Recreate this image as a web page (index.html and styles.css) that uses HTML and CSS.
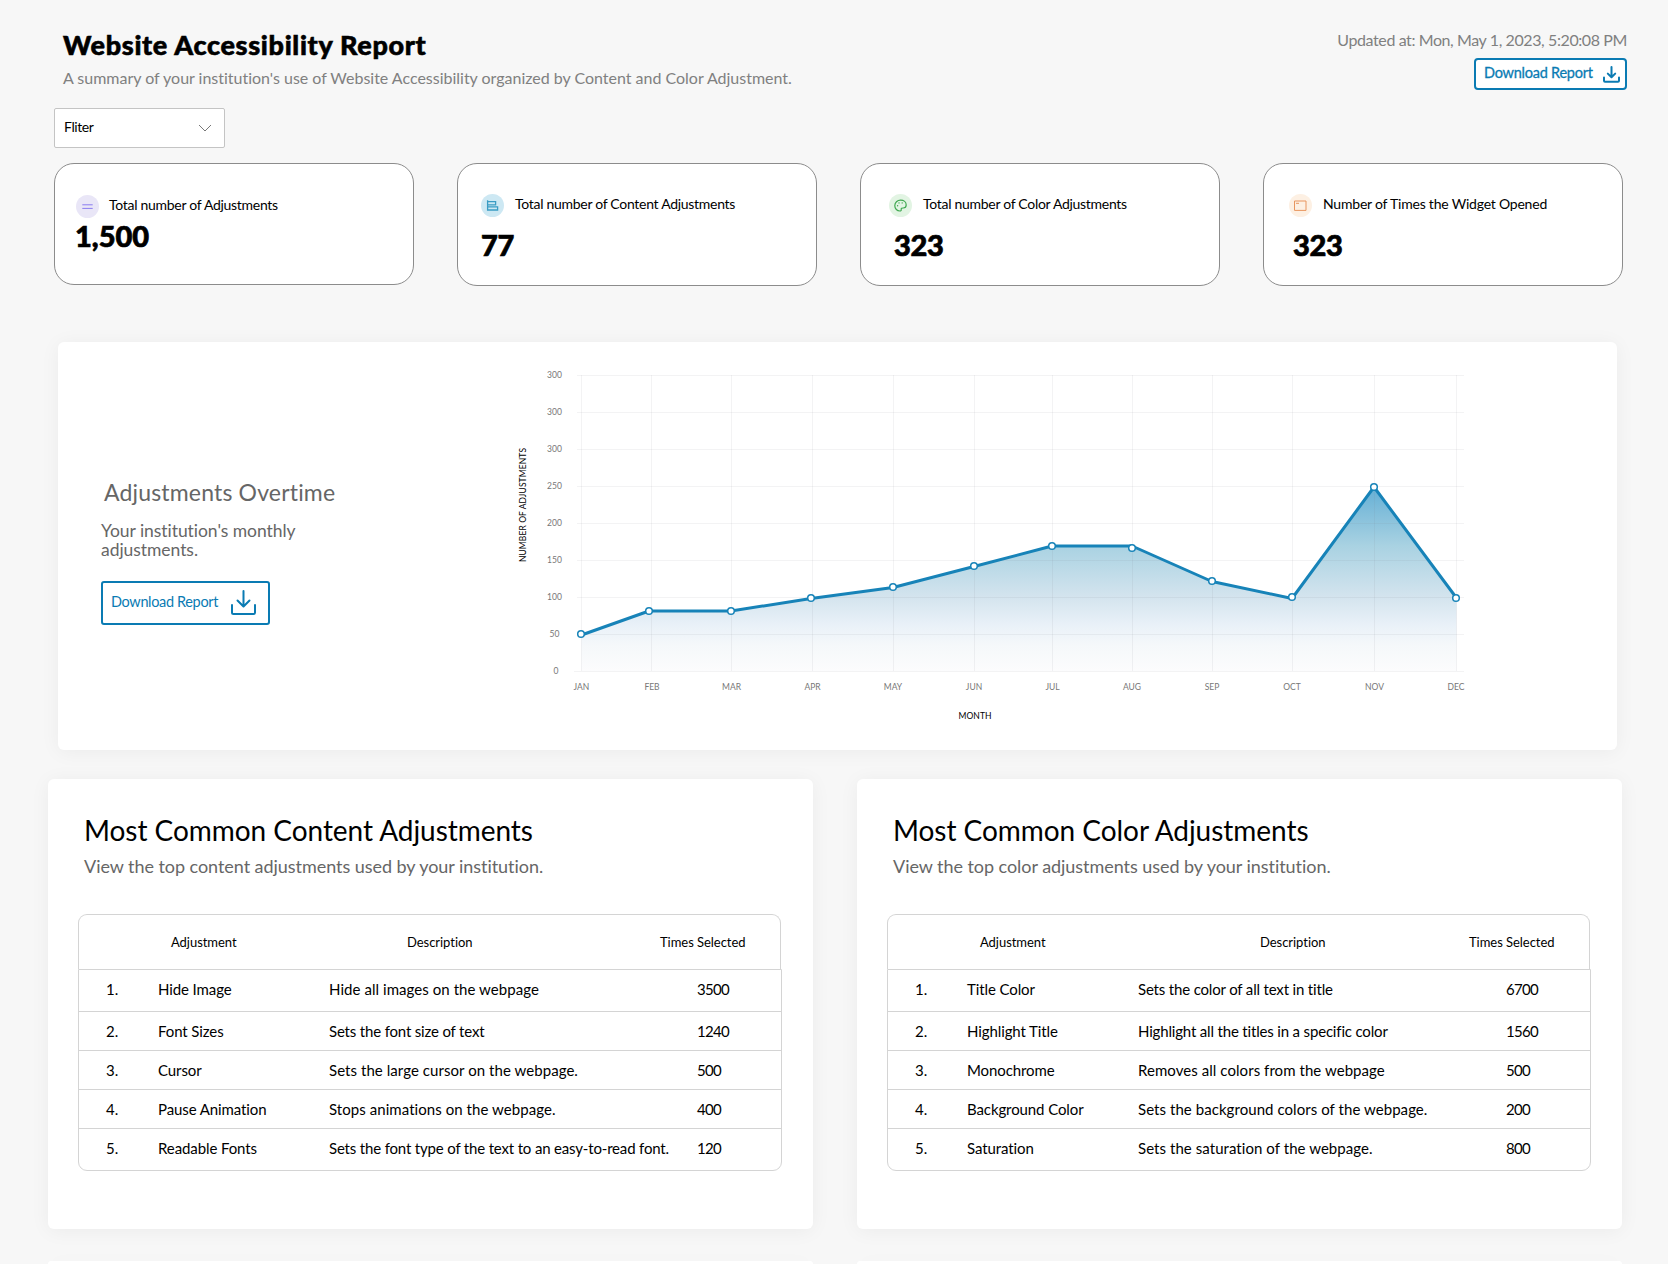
FILE: index.html
```html
<!DOCTYPE html>
<html lang="en">
<head>
  <meta charset="UTF-8" />
  <meta name="viewport" content="width=device-width, initial-scale=1.0"/>
  <title>Website Accessibility Report</title>
  <link rel="stylesheet" href="styles.css">
</head>
<body>

  <header class="header">
    <div>
      <h1>Website Accessibility Report</h1>
      <p class="summary">A summary of your institution's use of Website Accessibility organized by Content and Color Adjustment.</p>
    </div>
    <div class="header-right">
      <p class="updated">Updated at: Mon, May 1, 2023, 5:20:08 PM</p>
      <button class="download download-small">
        <span>Download Report</span>
        <svg width="17" height="17" viewBox="0 0 17 17"><path d="M8.5 1v10M4.8 7.6l3.7 3.7 3.7-3.7M1 11.5v3.2q0 1 1 1h13q1 0 1-1v-3.2"/></svg>
      </button>
    </div>
  </header>

  <button class="filter">
    <span>Fliter</span>
    <svg width="14" height="8" viewBox="0 0 14 8"><path d="M1 1l6 6 6-6"/></svg>
  </button>

  <section class="stats">
    <div class="stat stat-total">
      <div class="stat-top">
        <svg class="stat-icon" viewBox="0 0 23 23">
          <circle cx="11.5" cy="11.5" r="11.5" fill="#e9e6f7"/>
          <path d="M6.3 9.8h10.4M6.3 13.4h10.4" stroke="#8a7df0"/>
        </svg>
        <span>Total number of Adjustments</span>
      </div>
      <div class="value">1,500</div>
    </div>
    <div class="stat stat-content">
      <div class="stat-top">
        <svg class="stat-icon" viewBox="0 0 23 23">
          <circle cx="11.5" cy="11.5" r="11.5" fill="#cde8f3"/>
          <path d="M6.6 6.2v10.6M6.6 7.6h8v3.2h-8M6.600 12.800h10v3.200h-10" stroke="#3a9cc4" stroke-width="1.3"/>
        </svg>
        <span>Total number of Content Adjustments</span>
      </div>
      <div class="value">77</div>
    </div>
    <div class="stat stat-color">
      <div class="stat-top">
        <svg class="stat-icon" viewBox="0 0 23 23">
          <circle cx="11.5" cy="11.5" r="11.5" fill="#e2f4e3"/>
          <path d="M11.6 6.2c3.200 0 5.600 2 5.600 4.800 0 2.200-1.500 3-3 3-1.400 0-2.300.2-2 1.500.2 1-.4 1.500-1.300 1.500-2.800 0-5.100-2.300-5.100-5.300 0-3.100 2.500-5.500 5.800-5.500z" stroke="#3fa850" stroke-width="1.2"/>
          <g fill="#3fa850"><circle cx="8.6" cy="11.800" r=".7"/><circle cx="10" cy="8.900" r=".7"/><circle cx="13.200" cy="8.900" r=".7"/></g>
        </svg>
        <span>Total number of Color Adjustments</span>
      </div>
      <div class="value">323</div>
    </div>
    <div class="stat stat-widget">
      <div class="stat-top">
        <svg class="stat-icon" viewBox="0 0 23 23">
          <circle cx="11.5" cy="11.5" r="11.5" fill="#fdf0e3"/>
          <path d="M5.500 7h11.500v9.400H5.500z" stroke="#e8955f"/>
          <path d="M7 9.300h3" stroke="#e8955f"/>
        </svg>
        <span>Number of Times the Widget Opened</span>
      </div>
      <div class="value">323</div>
    </div>
  </section>

  <section class="overtime">
    <div class="overtime-info">
      <h2>Adjustments Overtime</h2>
      <p>Your institution's monthly<br>adjustments.</p>
      <button class="download download-large">
        <span>Download Report</span>
        <svg width="25" height="25" viewBox="0 0 25 25"><path d="M12.5 1v15M6.5 10.5l6 6 6-6M1 15v7.500q0 1.500 1.500 1.500h20q1.500 0 1.500-1.500V15"/></svg>
      </button>
    </div>
    <svg class="chart" viewBox="510 342 960 408">
      <defs>
        <linearGradient id="area" x1="0" y1="487" x2="0" y2="671" gradientUnits="userSpaceOnUse">
          <stop offset="0" stop-color="#64afd5"/>
          <stop offset=".32" stop-color="#a9d2e2"/>
          <stop offset=".6" stop-color="#d4e4ee"/>
          <stop offset=".75" stop-color="#e9f1f8"/>
          <stop offset=".86" stop-color="#f5f8fa"/>
          <stop offset="1" stop-color="#fcfcfd"/>
        </linearGradient>
      </defs>
      <path class="area" d="M581.5 635L649 611H731L811 598.5 893 587.5 974 566.5 1052 546H1132L1212 581.5 1292 598.5 1374 487 1456.5 598V671H581.5z"/>
      <path class="grid" d="M577 375.5h887M577 412.5h887M577 449.5h887M577 486.5h887M577 523.5h887M577 560.5h887M577 597.5h887M577 634.5h887M574 671.5h890M581.5 375v296M651.5 375v296M731.5 375v296M812.5 375v296M893.5 375v296M974.5 375v296M1052.5 375v296M1132.5 375v296M1212.5 375v296M1292.5 375v296M1374.5 375v296M1456.5 375v296"/>
      <path class="line" d="M581.5 635L649 611H731L811 598.5 893 587.5 974 566.5 1052 546H1132L1212 581.5 1292 598.5 1374 487 1456.5 598"/>
      <g class="dots">
        <circle cx="581" cy="634" r="3.3"/>
        <circle cx="649" cy="611" r="3.3"/>
        <circle cx="731" cy="611" r="3.3"/>
        <circle cx="811" cy="598" r="3.3"/>
        <circle cx="893" cy="587" r="3.3"/>
        <circle cx="974" cy="566" r="3.3"/>
        <circle cx="1052" cy="546" r="3.3"/>
        <circle cx="1132" cy="548" r="3.3"/>
        <circle cx="1212" cy="581" r="3.3"/>
        <circle cx="1292" cy="597" r="3.3"/>
        <circle cx="1374" cy="487" r="3.3"/>
        <circle cx="1456" cy="598" r="3.3"/>
      </g>
      <g class="tick">
        <text x="554.5" y="378">300</text>
        <text x="554.5" y="415">300</text>
        <text x="554.5" y="452">300</text>
        <text x="554.5" y="489">250</text>
        <text x="554.5" y="526">200</text>
        <text x="554.5" y="563">150</text>
        <text x="554.5" y="600">100</text>
        <text x="554.5" y="637">50</text>
        <text x="556" y="674">0</text>
        <text x="581.5" y="690">JAN</text>
        <text x="652" y="690">FEB</text>
        <text x="731.5" y="690">MAR</text>
        <text x="812.5" y="690">APR</text>
        <text x="893" y="690">MAY</text>
        <text x="974" y="690">JUN</text>
        <text x="1052.5" y="690">JUL</text>
        <text x="1132" y="690">AUG</text>
        <text x="1212" y="690">SEP</text>
        <text x="1292" y="690">OCT</text>
        <text x="1374.5" y="690">NOV</text>
        <text x="1456" y="690">DEC</text>
      </g>
      <g class="axis">
        <text x="975" y="719">MONTH</text>
        <text transform="translate(526 505) rotate(-90)">NUMBER OF ADJUSTMENTS</text>
      </g>
    </svg>
  </section>

  <section class="panels">
    <div class="panel">
      <h2>Most Common Content Adjustments</h2>
      <p>View the top content adjustments used by your institution.</p>
      <div class="table">
        <div class="thead"><span>Adjustment</span><span>Description</span><span>Times Selected</span></div>
        <div class="tbody">
          <div class="row"><span>1.</span><span>Hide Image</span><span>Hide all images on the webpage</span><span>3500</span></div>
          <div class="row"><span>2.</span><span>Font Sizes</span><span class="tight">Sets the font size of text</span><span>1240</span></div>
          <div class="row"><span>3.</span><span>Cursor</span><span>Sets the large cursor on the webpage.</span><span>500</span></div>
          <div class="row"><span>4.</span><span>Pause Animation</span><span>Stops animations on the webpage.</span><span>400</span></div>
          <div class="row"><span>5.</span><span>Readable Fonts</span><span class="tight">Sets the font type of the text to an easy-to-read font.</span><span>120</span></div>
        </div>
      </div>
    </div>
    <div class="panel">
      <h2>Most Common Color Adjustments</h2>
      <p>View the top color adjustments used by your institution.</p>
      <div class="table">
        <div class="thead thead-color"><span>Adjustment</span><span>Description</span><span>Times Selected</span></div>
        <div class="tbody">
          <div class="row"><span>1.</span><span>Title Color</span><span class="tight">Sets the color of all text in title</span><span>6700</span></div>
          <div class="row"><span>2.</span><span>Highlight Title</span><span class="tight">Highlight all the titles in a specific color</span><span>1560</span></div>
          <div class="row"><span>3.</span><span>Monochrome</span><span>Removes all colors from the webpage</span><span>500</span></div>
          <div class="row"><span>4.</span><span>Background Color</span><span>Sets the background colors of the webpage.</span><span>200</span></div>
          <div class="row"><span>5.</span><span>Saturation</span><span>Sets the saturation of the webpage.</span><span>800</span></div>
        </div>
      </div>
    </div>
    <div class="panel panel-next"></div>
    <div class="panel panel-next"></div>
  </section>

</body>
</html>
```
FILE: styles.css
```css
* { box-sizing: border-box; }
body {
  margin: 0;
  height: 1264px;
  overflow: hidden;
  background: #f7f7f7;
  color: #000;
  font-family: Lato, "Liberation Sans", sans-serif;
}
h1, h2, p { margin: 0; font-weight: 400; }
svg { display: block; fill: none; flex: none; }
button { font-family: inherit; padding: 0; background: #fff; }

.header { display: flex; justify-content: space-between; padding: 28px 41px 0 63px; }
h1 {
  padding-top: 1px;
  font-size: 27px;
  line-height: 32px;
  font-weight: 900;
  letter-spacing: 0.68px;
  -webkit-text-stroke: 0.6px #000;
}
.summary { margin-top: 5px; font-size: 16px; line-height: 24px; letter-spacing: -0.01px; color: #808080; }
.header-right { display: flex; flex-direction: column; align-items: flex-end; }
.updated { font-size: 16px; line-height: 24px; letter-spacing: -0.4px; color: #808080; }

.download { display: flex; color: #0a7bb3; border: 2px solid #0a7bb3; font-size: 14.5px; }
.download svg { stroke: #0a7bb3; stroke-width: 2; stroke-linecap: round; stroke-linejoin: round; }
.download-small {
  width: 153px;
  height: 32px;
  margin-top: 6px;
  padding: 6px 0 0 8px;
  gap: 10px;
  border-radius: 4px;
  line-height: 13px;
  letter-spacing: -0.24px;
  -webkit-text-stroke: 0.3px #0a7bb3;
}
.download-large {
  width: 169px;
  height: 44px;
  margin-top: 22px;
  padding: 7px 0 0 8px;
  gap: 13px;
  border-radius: 3px;
  line-height: 23px;
  letter-spacing: -0.35px;
}

.filter {
  display: flex;
  justify-content: space-between;
  align-items: center;
  width: 171px;
  height: 40px;
  margin: 18px 0 0 54px;
  padding: 0 12px 1px 9px;
  border: 1px solid #c4c4c4;
  border-radius: 2px;
  color: #000;
  font-size: 14px;
  letter-spacing: -0.4px;
}
.filter span { padding-bottom: 2px; }
.filter svg { stroke: #777; }

.stats {
  display: grid;
  grid-template-columns: repeat(4, 360px);
  gap: 43px;
  align-items: start;
  padding: 15px 0 0 54px;
}
.stat { height: 123px; border: 1px solid #8c8c8c; border-radius: 20px; background: #fff; }
.stat-top { display: flex; gap: 11px; font-size: 14px; line-height: 19px; letter-spacing: -0.29px; }
.stat-icon { width: 23px; height: 23px; }
.value {
  margin-top: 13px;
  font-size: 29px;
  line-height: 30px;
  font-weight: 900;
  letter-spacing: -0.3px;
  -webkit-text-stroke: 0.7px #000;
}
.stat-total { height: 122px; padding: 31px 0 0 21px; }
.stat-total .stat-top { gap: 10px; }
.stat-total .value { margin-top: 3px; margin-left: -1px; letter-spacing: 0; }
.stat-content { padding: 30px 0 0 23px; }
.stat-color { padding: 30px 0 0 28px; }
.stat-color .value { margin-left: 5px; }
.stat-widget { padding: 30px 0 0 25px; }
.stat-widget .stat-top { letter-spacing: -0.21px; }
.stat-widget .value { margin-left: 4px; }

.overtime {
  display: flex;
  width: 1559px;
  height: 408px;
  margin: 56px 0 0 58px;
  border-radius: 6px;
  background: #fff;
  box-shadow: 0 2px 20px rgba(0, 0, 0, 0.05);
}
.overtime-info { width: 452px; padding: 136px 0 0 43px; color: #666; }
.overtime-info h2 { margin-left: 3px; font-size: 23px; line-height: 28px; letter-spacing: 0.17px; }
.overtime-info p { margin-top: 16px; font-size: 17.5px; line-height: 18.5px; letter-spacing: -0.05px; }
.chart { width: 960px; height: 408px; }
.area { fill: url(#area); }
.grid { stroke: rgba(120, 120, 130, 0.09); }
.line { stroke: #1783b8; stroke-width: 3; stroke-linejoin: round; }
.dots { fill: #fff; stroke: #1783b8; stroke-width: 1.5; }
.tick { fill: #777; font-size: 8.5px; text-anchor: middle; }
.axis { fill: #000; font-size: 8.5px; text-anchor: middle; letter-spacing: 0.1px; }

.panels {
  display: grid;
  grid-template-columns: 765px 765px;
  grid-template-rows: 450px 3px;
  gap: 32px 44px;
  padding: 29px 0 0 48px;
}
.panel {
  padding: 33px 0 0 36px;
  border-radius: 6px;
  background: #fff;
  box-shadow: 0 2px 20px rgba(0, 0, 0, 0.05);
}
.panel-next { padding: 0; border-radius: 6px 6px 0 0; }
.panel h2 { padding-top: 1px; font-size: 28px; line-height: 34px; letter-spacing: -0.04px; }
.panel p { margin-top: 7px; font-size: 18px; line-height: 24px; letter-spacing: -0.05px; color: #666; }
.table { margin: 36px 0 0 -6px; width: 704px; }
.thead {
  display: grid;
  grid-template-columns: 236px 253px auto;
  width: 703px;
  height: 55px;
  padding-left: 92px;
  border: 1px solid #d4d4d4;
  border-bottom: 0;
  border-radius: 9px 9px 0 0;
  font-size: 13px;
  line-height: 54px;
  letter-spacing: -0.04px;
}
.thead-color { grid-template-columns: 280px 209px auto; }
.tbody { border: 1px solid #d4d4d4; border-radius: 0 0 9px 9px; }
.row {
  display: grid;
  grid-template-columns: 52px 171px 368px auto;
  height: 39px;
  padding-left: 27px;
  border-top: 1px solid #d4d4d4;
  font-size: 15px;
  line-height: 39px;
}
.row:first-child { height: 41px; border-top: 0; }
.row:last-child { height: 42px; }
.row span:nth-child(2) { letter-spacing: -0.1px; }
.row span:nth-child(3) { letter-spacing: 0.06px; white-space: nowrap; }
.row span:last-child { letter-spacing: -0.7px; }
.row .tight:nth-child(3) { letter-spacing: -0.17px; }
```
